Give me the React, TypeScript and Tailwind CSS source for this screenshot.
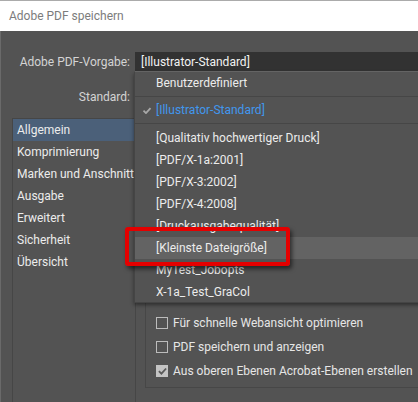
import React from 'react'

const sections = [
  'Allgemein',
  'Komprimierung',
  'Marken und Anschnitt',
  'Ausgabe',
  'Erweitert',
  'Sicherheit',
  'Übersicht',
]

const presets = [
  '[Qualitativ hochwertiger Druck]',
  '[PDF/X-1a:2001]',
  '[PDF/X-3:2002]',
  '[PDF/X-4:2008]',
  '[Druckausgabequalität]',
  '[Kleinste Dateigröße]',
  'MyTest_Jobopts',
  'X-1a_Test_GraCol',
]

const options = [
  { label: 'Für schnelle Webansicht optimieren', checked: false },
  { label: 'PDF speichern und anzeigen', checked: false },
  { label: 'Aus oberen Ebenen Acrobat-Ebenen erstellen', checked: true },
]

function Check({ className }: { className?: string }) {
  return (
    <svg viewBox="0 0 10 8" className={className} fill="none">
      <path d="M1 4.2 L3.8 7 L9 1.2" stroke="currentColor" strokeWidth="2" />
    </svg>
  )
}

function Checkbox({ checked }: { checked: boolean }) {
  return (
    <span
      className={
        checked
          ? 'w-[12px] h-[12px] flex items-center justify-center bg-[#c4c4c4] border border-[#c4c4c4] text-[#5a5a5a]'
          : 'w-[12px] h-[12px] border border-[#bcbcbc]'
      }
    >
      {checked && <Check className="w-[9px] h-[8px]" />}
    </span>
  )
}

export default function App() {
  return (
    <div
      className="relative w-[418px] h-[402px] overflow-hidden bg-[#535353] text-[12px] leading-none"
      style={{ fontFamily: 'Roboto, "Noto Sans", sans-serif' }}
    >
      {/* Title bar */}
      <div className="h-[31px] bg-white border-t border-[#ababab] flex items-center pl-[9px] text-[12px] text-[#7c7c7c]">
        Adobe PDF speichern
      </div>

      {/* Body */}
      <div className="flex flex-col h-[371px] border-l border-[#6a6a6a]">
        <div className="mt-[21px] flex items-center h-[20px]">
          <span className="w-[129px] text-right text-[#d4d4d4]">Adobe PDF-Vorgabe:</span>
          <div className="ml-[5px] flex-1 h-[20px] bg-[#323232] border-b border-[#6a6a6a] flex items-center pl-[6px] text-[#f2f2f2]">
            [Illustrator-Standard]
          </div>
        </div>

        <div className="mt-[15px] flex items-center h-[20px]">
          <span className="w-[129px] text-right text-[#d4d4d4]">Standard:</span>
        </div>

        <div className="mt-[11px] flex flex-1">
          {/* Section list */}
          <div className="ml-[11px] w-[124px] border-l border-t border-r border-[#464646] text-[#ececec]">
            {sections.map((s, i) => (
              <div
                key={s}
                className={
                  i === 0
                    ? 'h-[22px] flex items-center pl-[4px] bg-[#4b6079]'
                    : 'h-[22px] flex items-center pl-[4px]'
                }
              >
                {s}
              </div>
            ))}
          </div>

          {/* Right content */}
          <div className="flex-1 pl-[9px]">
            <div className="mt-[172px] border-l border-t border-b border-[#474747] pt-[20px] pb-[4px] pl-[10px] text-[#e6e6e6]">
              {options.map((o) => (
                <div key={o.label} className="h-[24px] flex items-center gap-[5px] whitespace-nowrap">
                  <Checkbox checked={o.checked} />
                  <span>{o.label}</span>
                </div>
              ))}
            </div>
          </div>
        </div>
      </div>

      {/* Open preset dropdown */}
      <div className="absolute left-[134px] top-[72px] w-[300px] h-[231px] bg-[#535353] border-l border-b border-[#454545] shadow-[0_2px_4px_rgba(0,0,0,0.45)] text-[#ececec]">
        <div className="h-[22px] flex items-center pl-[21px]">Benutzerdefiniert</div>
        <div className="h-[5px] pt-[2px]">
          <div className="h-px bg-[#464646]" />
        </div>
        <div className="relative h-[22px] flex items-center pl-[21px] text-[#4197ee]">
          <Check className="absolute left-[7px] top-[8px] w-[10px] h-[7px] text-[#a8a8a8]" />
          [Illustrator-Standard]
        </div>
        <div className="h-[6px] pt-[2px]">
          <div className="h-px bg-[#464646]" />
        </div>
        {presets.map((p) => (
          <div
            key={p}
            className={
              p === '[Kleinste Dateigröße]'
                ? 'h-[22px] flex items-center pl-[21px] bg-[#636363]'
                : 'h-[22px] flex items-center pl-[21px]'
            }
          >
            {p}
          </div>
        ))}
      </div>

      {/* Red highlight annotation */}
      <div className="absolute left-[125px] top-[227px] w-[165px] h-[39px] border-[4px] border-[#e40000] rounded-[3px] shadow-[2px_3px_4px_rgba(0,0,0,0.55)]" />
    </div>
  )
}
